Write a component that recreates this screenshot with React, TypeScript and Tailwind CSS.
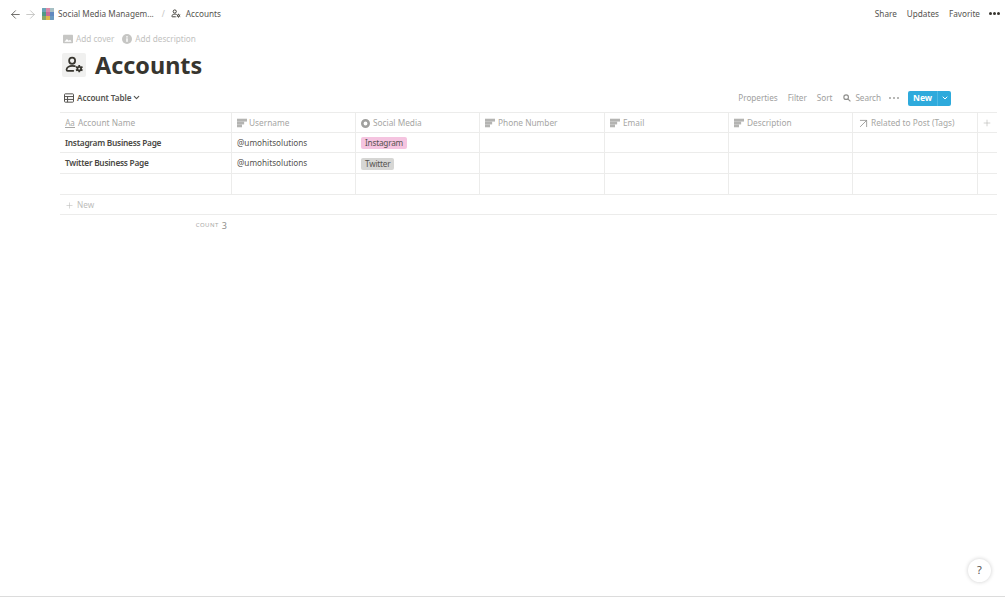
import { Plus, ChevronDown, ArrowLeft, ArrowRight, ArrowUpRight } from 'lucide-react';

const font = { fontFamily: '"Noto Sans", "Open Sans", sans-serif' };

function AccountsIcon({ className }: { className?: string }) {
  return (
    <svg viewBox="0 0 24 24" fill="none" stroke="currentColor" strokeWidth="2.2" className={className}>
      <circle cx="9" cy="6" r="3.8" />
      <path d="M12.5 12.8c-1-.3-2.300-.4-3.500-.4-3.600 0-7 2-7 4.600v.4c0 .9.500 1.300 1.300 1.300h7.200" strokeLinecap="round" />
      <circle cx="18" cy="16" r="2.3" />
      <path d="M18 11.5v2M18 18.5v2M13.9 13.7l2 1.100M20.100 17.200l2 1.100M13.900 18.300l2-1.100M20.100 14.800l2-1.100" strokeWidth="2.2" />
    </svg>
  );
}

function TextPropIcon() {
  return (
    <svg viewBox="0 0 14 14" className="w-[10px] h-[10px] shrink-0 text-[#b4b4b2]" fill="currentColor">
      <rect x="0" y="1" width="14" height="4" />
      <rect x="0" y="5" width="10" height="4" />
      <rect x="0" y="9" width="7" height="4" />
    </svg>
  );
}

function SelectPropIcon() {
  return (
    <svg viewBox="0 0 14 14" className="w-[9px] h-[9px] shrink-0 text-[#a0a09e]" fill="none" stroke="currentColor" strokeWidth="4">
      <circle cx="7" cy="7" r="5" />
    </svg>
  );
}

function NameIcon() {
  return <span className="text-[8px] leading-[9px] text-[#a8a8a6] border-b border-[#a8a8a6] shrink-0 w-[10px] text-center">Aa</span>;
}

function RelationIcon() {
  return <ArrowUpRight className="w-[15px] h-[15px] shrink-0 text-[#8f8f8d] -ml-[2px] -mr-[1px]" strokeWidth={1.3} />;
}

function ImageFilled() {
  return (
    <svg viewBox="0 0 14 14" className="w-[10px] h-[10px] shrink-0">
      <rect x="0" y="1" width="14" height="12" rx="1" fill="#c6c6c4" />
      <path d="M2 11l3.500-4 2.500 2.500 2-1.500 2 3z" fill="#ffffff" />
    </svg>
  );
}

function InfoFilled() {
  return (
    <svg viewBox="0 0 14 14" className="w-[10px] h-[10px] shrink-0">
      <circle cx="7" cy="7" r="7" fill="#c6c6c4" />
      <rect x="6" y="6" width="2" height="5" fill="#ffffff" />
      <rect x="6" y="3" width="2" height="2" fill="#ffffff" />
    </svg>
  );
}

function TableIcon() {
  return (
    <svg viewBox="0 0 14 14" className="w-[10px] h-[10px] shrink-0" fill="none" stroke="#55534f" strokeWidth="1.4">
      <rect x="0.7" y="1.2" width="12.6" height="11.6" rx="1" />
      <path d="M0.7 5h12.600M0.700 9h12.600M5 5v7.800" />
    </svg>
  );
}

function Dots({ className }: { className?: string }) {
  return (
    <div className={`flex items-center ${className}`}>
      <span className="w-[3px] h-[3px] rounded-full bg-current" />
      <span className="w-[3px] h-[3px] rounded-full bg-current ml-[1px]" />
      <span className="w-[3px] h-[3px] rounded-full bg-current ml-[1px]" />
    </div>
  );
}

function SmallDots() {
  return (
    <div className="flex items-center ml-[8px] text-[#a0a09e] gap-[2px]">
      <span className="w-[2px] h-[2px] rounded-full bg-current" />
      <span className="w-[2px] h-[2px] rounded-full bg-current" />
      <span className="w-[2px] h-[2px] rounded-full bg-current" />
    </div>
  );
}

function SearchIcon() {
  return (
    <svg viewBox="0 0 14 14" className="w-[8px] h-[8px] shrink-0" fill="none" stroke="#8f8f8d" strokeWidth="2">
      <circle cx="5.5" cy="5.5" r="4" />
      <path d="M8.5 8.5l4.500 4.500" />
    </svg>
  );
}

const columns = [
  { label: 'Account Name', width: 'w-[172px]', icon: NameIcon, gap: 'gap-[2px]' },
  { label: 'Username', width: 'w-[124px]', icon: TextPropIcon, gap: 'gap-[1px]' },
  { label: 'Social Media', width: 'w-[124px]', icon: SelectPropIcon, gap: 'gap-[2px]' },
  { label: 'Phone Number', width: 'w-[125px]', icon: TextPropIcon, gap: 'gap-[2px]' },
  { label: 'Email', width: 'w-[124px]', icon: TextPropIcon, gap: 'gap-[2px]' },
  { label: 'Description', width: 'w-[124px]', icon: TextPropIcon, gap: 'gap-[2px]' },
  { label: 'Related to Post (Tags)', width: 'w-[125px]', icon: RelationIcon, gap: 'gap-[0px]' },
];

const rows = [
  { name: 'Instagram Business Page', user: '@umohitsolutions', tag: 'Instagram', tagColor: 'bg-[#f5c4e0]', h: 'h-[20px]' },
  { name: 'Twitter Business Page', user: '@umohitsolutions', tag: 'Twitter', tagColor: 'bg-[#d6d6d4]', h: 'h-[21px]' },
  { name: '', user: '', tag: '', tagColor: '', h: 'h-[21px]' },
];

function Cell({ width, children }: { width: string; children?: React.ReactNode }) {
  return (
    <div className={`${width} shrink-0 h-full border-r border-[#ececeb] flex items-center px-[5px] pt-[1px] overflow-hidden`}>
      {children}
    </div>
  );
}

export default function App() {
  return (
    <div style={font} className="w-[1005px] h-[597px] bg-white relative overflow-hidden flex flex-col border-b border-[#dcdcdc] text-[#37352f]">
      <div className="h-[28px] flex items-center justify-between pl-[9px] pr-[5px] shrink-0 text-[8.2px]">
        <div className="flex items-center">
          <ArrowLeft className="w-[13px] h-[13px] text-[#55534f]" strokeWidth={1.5} />
          <ArrowRight className="w-[13px] h-[13px] ml-[2px] text-[#bcbcba]" strokeWidth={1.5} />
          <div className="w-[12px] h-[12px] ml-[5px] grid grid-cols-3 grid-rows-3 bg-[#7fa3a8] rounded-[1px] overflow-hidden">
            <span className="bg-[#6aa4b8]" />
            <span className="bg-[#d98aa8]" />
            <span className="bg-[#a6bfc4]" />
            <span className="bg-[#4f9a86]" />
            <span className="bg-[#c86a9a]" />
            <span className="bg-[#5f88c0]" />
            <span className="bg-[#8aa86a]" />
            <span className="bg-[#e0b84a]" />
            <span className="bg-[#6a9ac0]" />
          </div>
          <span className="ml-[4px] text-[#55534f]">Social Media Managem...</span>
          <span className="ml-[8px] text-[#c4c4c2]">/</span>
          <AccountsIcon className="w-[10px] h-[10px] ml-[6px] text-[#37352f]" />
          <span className="ml-[5px] text-[#55534f]">Accounts</span>
        </div>
        <div className="flex items-center text-[#55534f]">
          <span>Share</span>
          <span className="ml-[10px]">Updates</span>
          <span className="ml-[10px]">Favorite</span>
          <Dots className="ml-[9px] text-[#37352f]" />
        </div>
      </div>

      <div className="pl-[60px] pr-[8px] flex flex-col">
        <div className="flex items-center text-[8.2px] text-[#c2c2c0] h-[14px] mt-[4px] pl-[3px]">
          <ImageFilled />
          <span className="ml-[3px]">Add cover</span>
          <span className="ml-[8px]"><InfoFilled /></span>
          <span className="ml-[3px]">Add description</span>
        </div>
        <div className="flex items-center mt-[6px] pl-[2px]">
          <div className="w-[24px] h-[24px] bg-[#f0f0ef] rounded-[2px] flex items-center justify-center">
            <AccountsIcon className="w-[19px] h-[19px] text-[#37352f]" />
          </div>
          <h1 className="ml-[9px] text-[23.4px] leading-[26px] font-bold text-[#37352f]">Accounts</h1>
        </div>

        <div className="flex items-center justify-between h-[20px] mt-[10px] pl-[4px] pr-[46px]">
          <div className="flex items-center text-[8.2px] tracking-[-0.1px] font-semibold text-[#55534f]">
            <TableIcon />
            <span className="ml-[3px]">Account Table</span>
            <ChevronDown className="w-[9px] h-[9px] ml-[1px]" strokeWidth={3} />
          </div>
          <div className="flex items-center text-[8.2px] tracking-[-0.05px] text-[#a0a09e]">
            <span>Properties</span>
            <span className="ml-[10px]">Filter</span>
            <span className="ml-[10px]">Sort</span>
            <span className="ml-[11px]"><SearchIcon /></span>
            <span className="ml-[4px]">Search</span>
            <SmallDots />
            <div className="ml-[9px] w-[43px] h-[15px] rounded-[2px] bg-[#2eaadc] text-white font-bold flex items-center text-[8.5px]">
              <span className="w-[29px] text-center">New</span>
              <span className="h-full border-l border-[#4fb9e3] flex-1 flex items-center justify-center">
                <ChevronDown className="w-[8px] h-[8px]" strokeWidth={3} />
              </span>
            </div>
          </div>
        </div>

        <div className="mt-[4px] border-t border-[#ececeb] flex flex-col">
          <div className="flex h-[20px] border-b border-[#ececeb] text-[8.3px] text-[#a6a6a4]">
            {columns.map((col) => {
              const Icon = col.icon;
              return (
                <Cell key={col.label} width={col.width}>
                  <div className={`flex items-center ${col.gap}`}>
                    <Icon />
                    <span className="ml-[1px] whitespace-nowrap">{col.label}</span>
                  </div>
                </Cell>
              );
            })}
            <div className="flex-1 flex items-center justify-center pr-[2px]">
              <Plus className="w-[10px] h-[10px] text-[#b8b8b6]" strokeWidth={1.5} />
            </div>
          </div>
          {rows.map((row, i) => (
            <div key={i} className={`flex ${row.h} border-b border-[#ececeb] text-[8.2px] text-[#37352f]`}>
              <Cell width="w-[172px]">
                <span className="font-semibold text-[8.3px] tracking-[-0.25px] text-[#4a4844] whitespace-nowrap">{row.name}</span>
              </Cell>
              <Cell width="w-[124px]">
                <span className="text-[#55534f] whitespace-nowrap">{row.user}</span>
              </Cell>
              <Cell width="w-[124px]">
                {row.tag && (
                  <span className={`${row.tagColor} px-[4px] h-[12px] leading-[12px] rounded-[2px] tracking-[-0.2px] text-[#55534f]`}>{row.tag}</span>
                )}
              </Cell>
              <Cell width="w-[125px]" />
              <Cell width="w-[124px]" />
              <Cell width="w-[124px]" />
              <Cell width="w-[125px]" />
            </div>
          ))}
          <div className="h-[20px] flex items-center pl-[5px] pt-[2px] border-b border-[#ececeb] text-[8.2px] text-[#bcbcba]">
            <Plus className="w-[9px] h-[9px] mr-[3px]" strokeWidth={1.5} />
            <span>New</span>
          </div>
          <div className="w-[171px] h-[21px] flex items-center justify-end pr-[4px] text-[#8f8f8d]">
            <span className="text-[6px] tracking-[0.5px] text-[#a8a8a6]">COUNT</span>
            <span className="ml-[3px] text-[9px]">3</span>
          </div>
        </div>
      </div>

      <div className="absolute right-[14px] bottom-[14px] w-[23px] h-[23px] rounded-full bg-white shadow-[0_0_4px_rgba(0,0,0,0.2)] flex items-center justify-center text-[11px] text-[#55534f]">
        ?
      </div>
    </div>
  );
}
